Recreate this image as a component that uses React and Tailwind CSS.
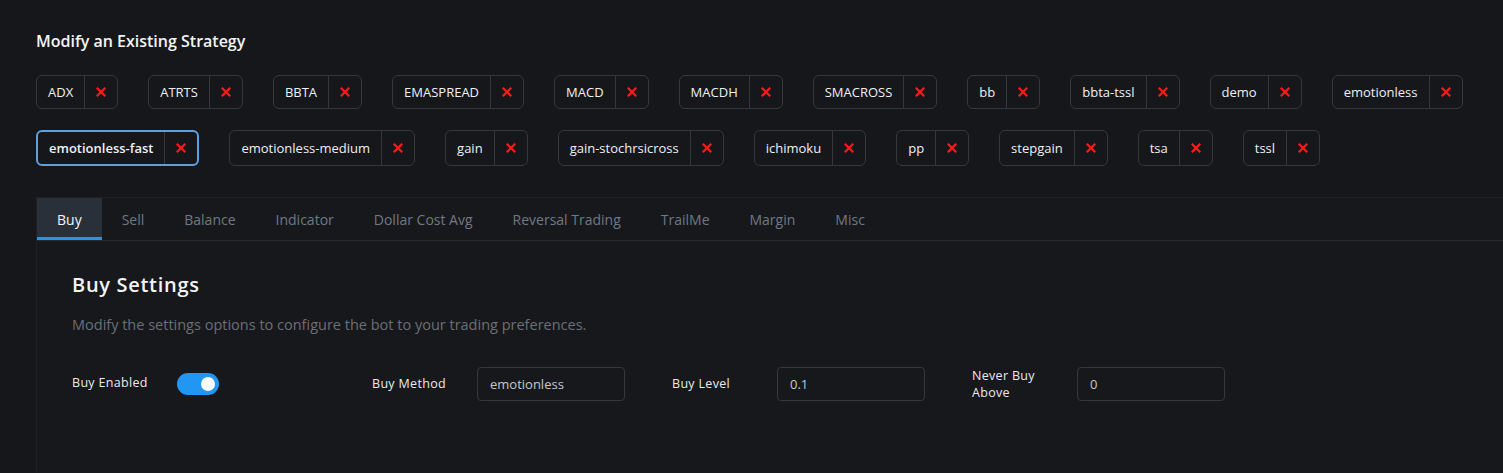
import React, { useState } from "react";

const strategies = [
  "ADX",
  "ATRTS",
  "BBTA",
  "EMASPREAD",
  "MACD",
  "MACDH",
  "SMACROSS",
  "bb",
  "bbta-tssl",
  "demo",
  "emotionless",
  "emotionless-fast",
  "emotionless-medium",
  "gain",
  "gain-stochrsicross",
  "ichimoku",
  "pp",
  "stepgain",
  "tsa",
  "tssl",
];

const tabs = [
  "Buy",
  "Sell",
  "Balance",
  "Indicator",
  "Dollar Cost Avg",
  "Reversal Trading",
  "TrailMe",
  "Margin",
  "Misc",
];

const Chip = ({ name, active }) => (
  <div
    className={`flex items-stretch rounded-md ${
      active ? "border-2 border-[#5e9fdc]" : "border border-[#35373c]"
    }`}
  >
    <span
      className={`flex items-center px-[11px] py-[6px] text-[13px] leading-[20px] text-[#eef0f3] ${
        active ? "font-semibold" : ""
      }`}
    >
      {name}
    </span>
    <button className="flex items-center border-l border-[#35373c] px-[11px]">
      <svg width="10" height="10" viewBox="0 0 10 10">
        <path
          d="M1.5 1.5 L8.5 8.5 M8.5 1.5 L1.5 8.5"
          stroke="#ff1a1a"
          strokeWidth="2.2"
          strokeLinecap="square"
        />
      </svg>
    </button>
  </div>
);

const Field = ({ label, value }) => (
  <div className="flex w-[300px] items-center">
    <label className="w-[105px] pr-6 text-[12.5px] font-medium leading-[17px] tracking-wide text-[#e8eaed]">
      {label}
    </label>
    <input
      readOnly
      value={value}
      className="h-[34px] w-[148px] rounded border border-[#35373c] bg-transparent px-3 text-[13px] text-[#c4c8ce] outline-none"
    />
  </div>
);

export default function App() {
  const [enabled, setEnabled] = useState(true);
  const [tab, setTab] = useState("Buy");

  return (
    <div
      className="min-h-[473px] bg-[#16171b] pl-9 pt-[29px]"
      style={{ fontFamily: '"Open Sans", "Noto Sans", sans-serif' }}
    >
      <h2 className="text-[16px] font-semibold text-[#f3f4f6]">
        Modify an Existing Strategy
      </h2>

      <div className="mt-[22px] mr-9 flex flex-wrap gap-x-[30px] gap-y-[21px]">
        {strategies.map((s) => (
          <Chip key={s} name={s} active={s === "emotionless-fast"} />
        ))}
      </div>

      <div className="mt-[31px] rounded-bl-lg border-l border-t border-[#1f2024] bg-[#17181c]">
        <div className="flex border-b border-[#2a2b30]">
          {tabs.map((t) => (
            <button
              key={t}
              onClick={() => setTab(t)}
              className={`h-[42px] px-5 text-[14px] ${
                tab === t
                  ? "border-b-[3px] border-[#2196f3] bg-[#2a303a] pt-[3px] text-[#f3f4f6]"
                  : "text-[#6f7885]"
              }`}
            >
              {t}
            </button>
          ))}
        </div>

        <div className="pl-[35px] pr-9 pt-[29px] pb-[77px]">
          <h3 className="text-[20px] font-semibold tracking-[0.035em] text-[#f3f4f6]">
            Buy Settings
          </h3>
          <p className="mt-[14px] text-[14.5px] text-[#6b6f76]">
            Modify the settings options to configure the bot to your trading
            preferences.
          </p>

          <div className="mt-[31px] flex items-center">
            <div className="flex w-[300px] items-center">
              <label className="w-[105px] text-[12.5px] font-medium tracking-wide text-[#e8eaed]">
                Buy Enabled
              </label>
              <button
                onClick={() => setEnabled(!enabled)}
                className={`flex h-[22px] w-[42px] items-center rounded-full px-1 ${
                  enabled ? "justify-end bg-[#2196f3]" : "justify-start bg-[#3a3b40]"
                }`}
              >
                <span className="h-[14px] w-[14px] rounded-full bg-white" />
              </button>
            </div>
            <Field label="Buy Method" value="emotionless" />
            <Field label="Buy Level" value="0.1" />
            <Field label="Never Buy Above" value="0" />
          </div>
        </div>
      </div>
    </div>
  );
}
